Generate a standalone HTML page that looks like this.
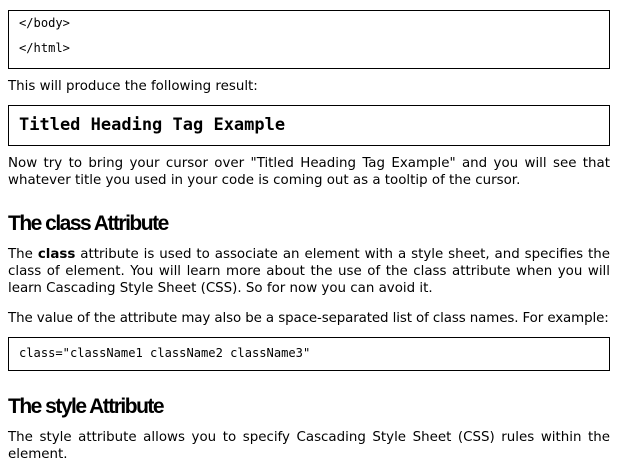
<!DOCTYPE html>
<html><head><meta charset="utf-8"><style>
body{margin:0;background:#fff;width:629px;height:464px;position:relative;overflow:hidden;font-family:"DejaVu Sans",Verdana,sans-serif;color:#000;font-size:13.4px}
.a{position:absolute;left:8px;width:602px}
.box{position:absolute;left:8px;width:600px;border:1px solid #000}
.m{font-family:"DejaVu Sans Mono","Liberation Mono",monospace;font-size:12.1px;position:absolute;left:10px}
p{margin:0;line-height:17px;text-align:justify}
h2{margin:0;font-family:"Liberation Sans",Arial,sans-serif;font-weight:bold;font-size:21px;letter-spacing:-1.5px;position:absolute;left:8px}
</style></head><body>
<div class="box" style="top:10px;height:57px">
<div class="m" style="top:5px">&lt;/body&gt;</div>
<div class="m" style="top:30px">&lt;/html&gt;</div>
</div>
<p class="a" style="top:78px">This will produce the following result:</p>
<div class="box" style="top:105px;height:39px">
<div class="m" style="top:9px;font-size:17px;font-weight:bold">Titled Heading Tag Example</div>
</div>
<p class="a" style="top:155px">Now try to bring your cursor over "Titled Heading Tag Example" and you will see that whatever title you used in your code is coming out as a tooltip of the cursor.</p>
<h2 style="top:212px">The class Attribute</h2>
<p class="a" style="top:246px">The <b>class</b> attribute is used to associate an element with a style sheet, and specifies the class of element. You will learn more about the use of the class attribute when you will learn Cascading Style Sheet (CSS). So for now you can avoid it.</p>
<p class="a" style="top:310px;white-space:nowrap;letter-spacing:-0.1px">The value of the attribute may also be a space-separated list of class names. For example:</p>
<div class="box" style="top:337px;height:32px">
<div class="m" style="top:8px">class="className1 className2 className3"</div>
</div>
<h2 style="top:395px">The style Attribute</h2>
<p class="a" style="top:429px">The style attribute allows you to specify Cascading Style Sheet (CSS) rules within the element.</p>
</body></html>
